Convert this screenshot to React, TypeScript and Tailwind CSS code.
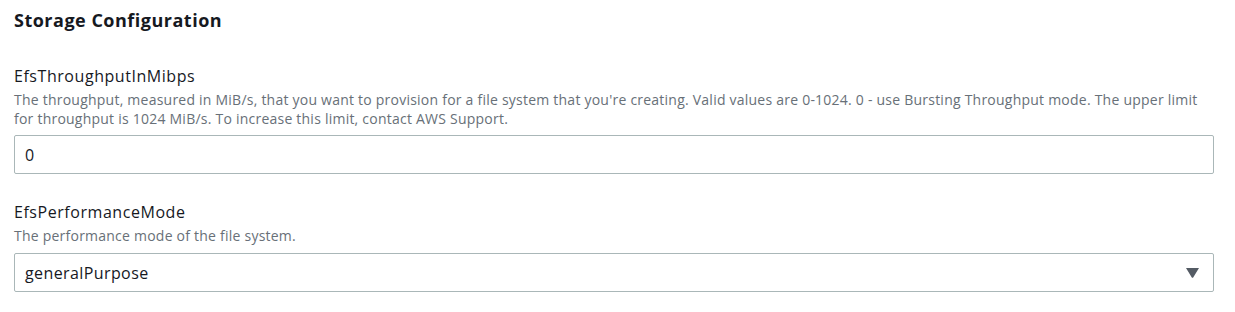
import React from 'react';

export default function App() {
  return (
    <div className="w-[1235px] h-[312px] bg-white font-['Open_Sans',sans-serif] text-[#16191f]">
      <div className="pl-[14px] pr-[21px] pt-[6px]">
        <h2 className="text-[18px] leading-[28px] font-bold tracking-[0.5px]">Storage Configuration</h2>

        {/* Throughput */}
        <div className="mt-[30px]">
          <label className="block text-[16px] leading-[24px] tracking-[0.55px]">EfsThroughputInMibps</label>
          <p className="mt-[2px] text-[14px] leading-[19px] tracking-[0.23px] text-[#687078]">
            The throughput, measured in MiB/s, that you want to provision for a file system that you're creating. Valid values are 0-1024. 0 - use Bursting Throughput mode. The upper limit for throughput is 1024 MiB/s. To increase this limit, contact AWS Support.
          </p>
          <div className="mt-[7px] h-[39px] border border-[#aab7b8] rounded-[2px] flex items-center px-[10px] text-[16px] tracking-[0.4px]">
            0
          </div>
        </div>

        {/* Performance mode */}
        <div className="mt-[26px]">
          <label className="block text-[16px] leading-[24px] tracking-[0.55px]">EfsPerformanceMode</label>
          <p className="mt-[2px] text-[14px] leading-[19px] tracking-[0.23px] text-[#687078]">The performance mode of the file system.</p>
          <div className="mt-[8px] h-[39px] border border-[#aab7b8] rounded-[2px] flex items-center justify-between pl-[10px] pr-[14px] text-[16px] tracking-[0.4px]">
            <span>generalPurpose</span>
            <svg width="13" height="10" viewBox="0 0 13 10">
              <path d="M0 0h13L7.2 9.4a0.8 0.8 0 0 1-1.4 0z" fill="#545b64" />
            </svg>
          </div>
        </div>
      </div>
    </div>
  );
}
